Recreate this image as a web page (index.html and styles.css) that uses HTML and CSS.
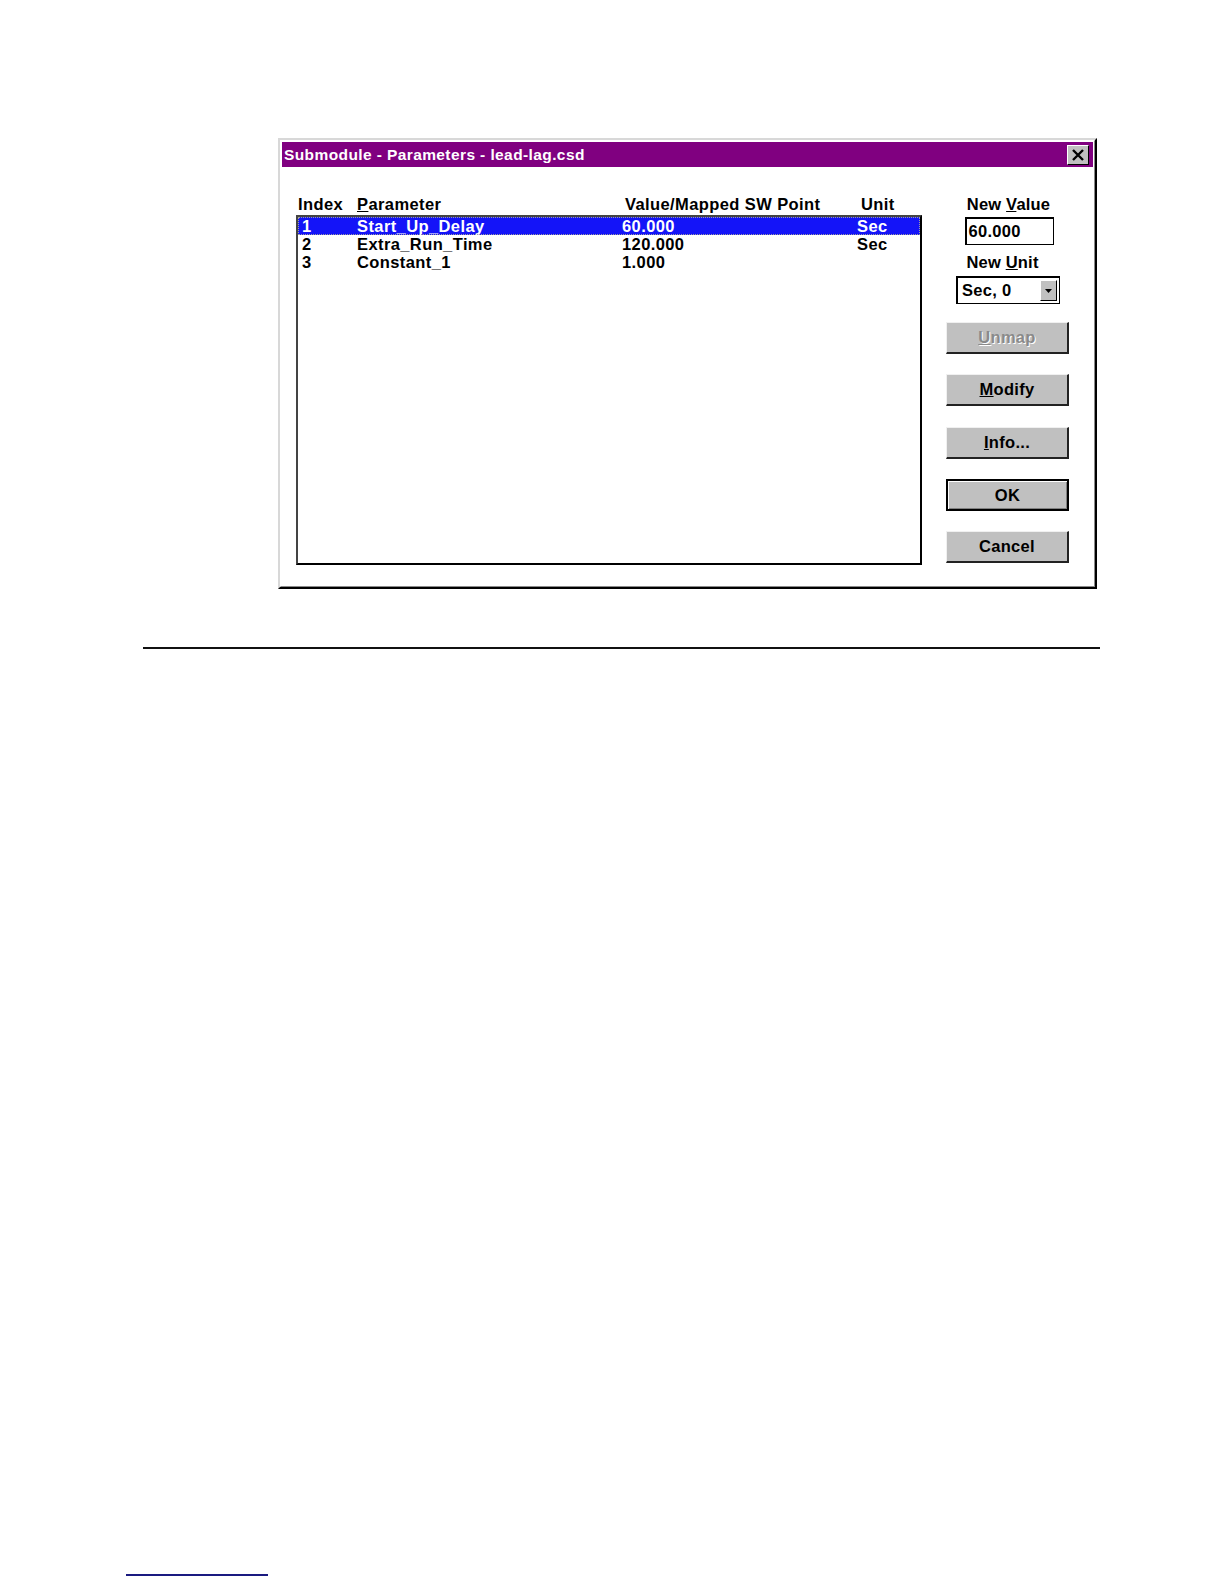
FILE: index.html
```html
<!DOCTYPE html>
<html>
<head>
<meta charset="utf-8">
<link rel="stylesheet" href="styles.css">
</head>
<body>
<div class="page">
  <div class="dialog">
    <div class="frame">
      <div class="titlebar">
        <span class="title">Submodule - Parameters - lead-lag.csd</span>
        <span class="close">
          <svg width="14" height="12" viewBox="0 0 14 12"><path d="M2 1 L12 11 M12 1 L2 11" stroke="#000" stroke-width="2.4"/></svg>
        </span>
      </div>
      <div class="body">
        <div class="left">
          <div class="header">
            <span class="h-index">Index</span>
            <span class="h-param"><u>P</u>arameter</span>
            <span class="h-value">Value/Mapped SW Point</span>
            <span class="h-unit">Unit</span>
          </div>
          <div class="listbox">
            <div class="row selected"><span>1</span><span>Start_Up_Delay</span><span>60.000</span><span>Sec</span></div>
            <div class="row"><span>2</span><span>Extra_Run_Time</span><span>120.000</span><span>Sec</span></div>
            <div class="row"><span>3</span><span>Constant_1</span><span>1.000</span><span></span></div>
          </div>
        </div>
        <div class="right">
          <div class="label label-value">New <u>V</u>alue</div>
          <div class="textbox">60.000</div>
          <div class="label label-unit">New <u>U</u>nit</div>
          <div class="combo">
            <span class="combo-text">Sec, 0</span>
            <span class="combo-btn"><svg width="7" height="4" viewBox="0 0 7 4"><path d="M0 0 H7 L3.5 4 Z" fill="#000"/></svg></span>
          </div>
          <div class="btn disabled btn-unmap"><span><u>U</u>nmap</span></div>
          <div class="btn"><span><u>M</u>odify</span></div>
          <div class="btn btn-info"><span><u>I</u>nfo...</span></div>
          <div class="btn default"><span>OK</span></div>
          <div class="btn"><span>Cancel</span></div>
        </div>
      </div>
    </div>
  </div>
  <div class="rule"></div>
  <div class="spacer"></div>
  <div class="footnote-line"></div>
</div>
</body>
</html>
```

FILE: styles.css
```css
html, body {
  margin: 0;
  padding: 0;
  background: #fff;
}
.page {
  padding-top: 138px;
  font-family: "Liberation Sans", Arial, sans-serif;
  font-weight: bold;
  color: #000;
}
.dialog {
  margin-left: 278px;
  width: 819px;
  height: 451px;
  box-sizing: border-box;
  border-top: 2px solid #d8d8d8;
  border-left: 2px solid #d8d8d8;
  border-right: 2px solid #000;
  border-bottom: 2px solid #000;
  background: #fff;
}
.frame {
  height: 100%;
  box-sizing: border-box;
  border-top: 1px solid #fff;
  border-left: 1px solid #fff;
  border-right: 1px solid #8a8a8a;
  border-bottom: 1px solid #8a8a8a;
  padding: 1px;
  display: flex;
  flex-direction: column;
}
.titlebar {
  height: 25px;
  background: #800080;
  display: flex;
  align-items: center;
  justify-content: space-between;
  padding: 0 4px 0 2px;
}
.title {
  color: #fff;
  font-size: 15.5px;
  letter-spacing: 0.4px;
}
.close {
  width: 22px;
  height: 20px;
  background: #c0c0c0;
  box-sizing: border-box;
  border-top: 1px solid #fff;
  border-left: 1px solid #fff;
  border-right: 1px solid #000;
  border-bottom: 1px solid #000;
  display: flex;
  align-items: center;
  justify-content: center;
}
.body {
  flex: 1;
  display: flex;
  padding: 27px 0 0 14px;
}
.left {
  width: 626px;
  display: flex;
  flex-direction: column;
}
.header {
  display: grid;
  grid-template-columns: 59px 265px 235px 1fr;
  font-size: 16.5px;
  letter-spacing: 0.4px;
  height: 21px;
  line-height: 20px;
  padding-left: 2px;
}
.h-value { padding-left: 3px; }
.h-unit { padding-left: 4px; }
.listbox {
  height: 350px;
  box-sizing: border-box;
  border: 2px solid #000;
  border-top-color: #444;
  border-left-color: #444;
}
.row {
  display: grid;
  grid-template-columns: 55px 265px 235px 1fr;
  height: 18px;
  line-height: 18px;
  font-size: 16.5px;
  letter-spacing: 0.4px;
  padding-left: 4px;
  box-sizing: border-box;
}
.selected {
  background: #1414f8;
  color: #fff;
  outline: 1px dotted #a0a0a0;
  outline-offset: -1px;
}
.right {
  width: 123px;
  margin-left: 24px;
  display: flex;
  flex-direction: column;
  align-items: center;
}
.label {
  font-size: 16.5px;
  letter-spacing: 0.2px;
  line-height: 20px;
  height: 20px;
}
.label-value { margin-left: 2px; }
.textbox {
  margin-top: 3px;
  margin-left: 3px;
  width: 89px;
  height: 28px;
  box-sizing: border-box;
  border: 2px solid #000;
  border-right-width: 1px;
  border-bottom-width: 1px;
  font-size: 16.5px;
  letter-spacing: 0.3px;
  line-height: 24px;
  padding-left: 2px;
}
.label-unit { margin-top: 7px; margin-left: -10px; }
.combo {
  margin-top: 4px;
  margin-left: 1px;
  width: 104px;
  height: 28px;
  box-sizing: border-box;
  border: 2px solid #000;
  border-right-width: 1px;
  border-bottom-width: 1px;
  display: flex;
  align-items: center;
  justify-content: space-between;
  padding: 0 2px 0 4px;
}
.combo-text {
  font-size: 16.5px;
  letter-spacing: 0.3px;
}
.combo-btn {
  width: 17px;
  height: 21px;
  background: #c0c0c0;
  box-sizing: border-box;
  border-top: 1px solid #fff;
  border-left: 1px solid #fff;
  border-right: 1px solid #000;
  border-bottom: 1px solid #000;
  display: flex;
  align-items: center;
  justify-content: center;
}
.btn {
  width: 123px;
  height: 32px;
  box-sizing: border-box;
  background: #c0c0c0;
  border-top: 1px solid #f0f0f0;
  border-left: 1px solid #f0f0f0;
  border-right: 2px solid #222;
  border-bottom: 2px solid #222;
  display: flex;
  align-items: center;
  justify-content: center;
  font-size: 16.5px;
  letter-spacing: 0.3px;
  margin-top: 20px;
}
.btn.btn-unmap { margin-top: 18px; }
.btn.btn-info { margin-top: 21px; }
.btn.disabled {
  color: #8a8a8a;
  text-shadow: 1px 1px 0 #fff;
}
.btn.default {
  border: 2px solid #000;
  box-shadow: inset 1px 1px 0 #fff, inset -1px -1px 0 #808080;
}
.rule {
  margin-top: 58px;
  margin-left: 143px;
  width: 957px;
  height: 2px;
  background: #111;
}
.spacer {
  height: 925px;
}
.footnote-line {
  margin-left: 126px;
  width: 142px;
  height: 2px;
  background: #1a1a80;
}
```
